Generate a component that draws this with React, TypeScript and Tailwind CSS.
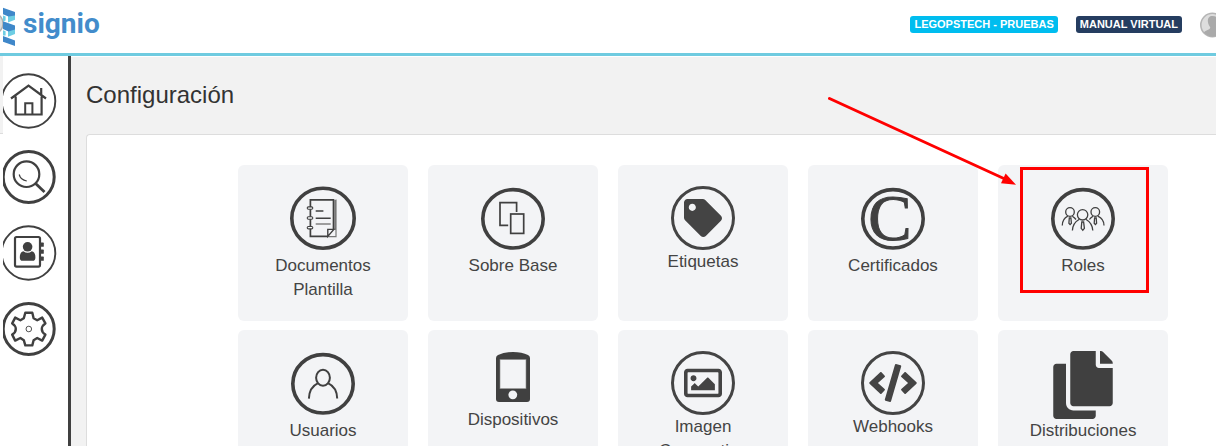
import type { ReactNode } from 'react';
import { FaCode, FaCopy, FaRegImage, FaTag } from 'react-icons/fa';

interface ConfigItem {
  label: string;
  icon: ReactNode;
  highlighted?: boolean;
}

/* Iconos de las tarjetas */
const RoundIcon = ({ children }: { children: ReactNode }) => (
  <span className="flex h-16 w-16 items-center justify-center rounded-full border-3 border-[#444]">
    {children}
  </span>
);

const RingIcon = ({ children }: { children: ReactNode }) => (
  <svg
    width="64"
    height="68"
    viewBox="0 0 64 68"
    fill="none"
    stroke="#404040"
    className="overflow-visible"
    aria-hidden="true"
  >
    <ellipse cx="32" cy="32.8" rx="30.2" ry="29.2" strokeWidth="3.6" />
    {children}
  </svg>
);

const NotebookIcon = () => (
  <svg width="66" height="68" viewBox="0 0 66 68" fill="none" stroke="#404040" aria-hidden="true">
    <ellipse cx="33" cy="32.2" rx="31.2" ry="30" strokeWidth="3.6" />
    <path d="M43.5 43V13.8H20.4V50.4H38" strokeWidth="1.7" />
    <path d="M46 13.5V50.6H38M44.8 14V44" stroke="#777" strokeWidth="1.2" />
    <path d="M37.8 50.4V43.4H43.8L37.8 50.4Z" strokeWidth="1.4" />
    <path d="M25.7 25H33.4M25.7 32.3H40.7" strokeWidth="1.4" />
    <path d="M25.7 38H40.7" stroke="#888" strokeWidth="1.6" />
    <g fill="#f3f4f6" strokeWidth="1.1">
      <rect x="17.2" y="20.9" width="5.6" height="2.4" rx="1.2" />
      <rect x="17.2" y="30.8" width="5.6" height="2.4" rx="1.2" />
      <rect x="17.2" y="40.5" width="5.6" height="2.4" rx="1.2" />
    </g>
  </svg>
);

const DeviceIcon = () => (
  <svg width="34" height="57" viewBox="0 0 34 57" aria-hidden="true">
    <path d="M0 7Q0 5 2 4Q8 1 17 1T32 4Q34 5 34 7V48Q34 51 31 51H3Q0 51 0 48Z" fill="#404040" />
    <rect x="4" y="8.5" width="26" height="29.2" fill="#f3f4f6" stroke="#888" strokeWidth="0.6" />
    <circle cx="16.8" cy="43.8" r="4.4" fill="#f3f4f6" />
  </svg>
);

const items: ConfigItem[] = [
  { label: 'Documentos Plantilla', icon: <NotebookIcon /> },
  {
    label: 'Sobre Base',
    icon: (
      <RingIcon>
        <path d="M35.6 26V16.6H19V39.4H27.2" strokeWidth="1.7" />
        <rect x="29.7" y="28" width="13" height="19.4" strokeWidth="1.7" />
      </RingIcon>
    ),
  },
  {
    label: 'Etiquetas',
    icon: (
      <RoundIcon>
        <FaTag size={38} />
      </RoundIcon>
    ),
  },
  {
    label: 'Certificados',
    icon: (
      <RingIcon>
        <text
          x="29"
          y="54"
          textAnchor="middle"
          fontSize="65"
          fill="#404040"
          strokeWidth="1"
          className="font-['Liberation_Serif',serif]"
        >
          C
        </text>
      </RingIcon>
    ),
  },
  {
    label: 'Roles',
    highlighted: true,
    icon: (
      <RingIcon>
        <g strokeWidth="1.3">
          <circle cx="19" cy="26" r="4.3" />
          <circle cx="44.3" cy="26" r="4.3" />
          <circle cx="31.6" cy="28.8" r="5.2" />
          <path d="M11.3 39.5Q11.3 33 16.8 30.2M21.3 30.2Q23.5 31.5 25 33.5" />
          <path d="M53 39.5Q53 33 46.8 30.2M42 30.2Q39.8 31.5 38.4 33.5" />
          <path d="M21.4 44.5Q21.6 37 28.4 33.2M34.8 33.2Q41.4 37 41.8 44.5" />
          <path d="M18.3 32H19.9L20.4 37.2L19.1 38.6L17.9 37.2ZM43.6 32H45.2L45.6 37.2L44.4 38.6L43.2 37.2Z" />
          <path d="M30.8 36H32.6L33.4 42.4L31.8 44.2L30.2 42.4Z" />
        </g>
      </RingIcon>
    ),
  },
  {
    label: 'Usuarios',
    icon: (
      <RingIcon>
        <ellipse cx="32" cy="26.7" rx="6.9" ry="8" strokeWidth="2" />
        <path d="M17.9 47.6Q18.2 36.5 27 32.2M37 32.2Q46 36.5 46.2 47.6" strokeWidth="2" />
      </RingIcon>
    ),
  },
  { label: 'Dispositivos', icon: <DeviceIcon /> },
  {
    label: 'Imagen Corporativa',
    icon: (
      <RoundIcon>
        <FaRegImage size={38} />
      </RoundIcon>
    ),
  },
  {
    label: 'Webhooks',
    icon: (
      <RoundIcon>
        <FaCode className="h-[38px] w-12 shrink-0" />
      </RoundIcon>
    ),
  },
  { label: 'Distribuciones', icon: <FaCopy size={68} className="text-[#404040]" /> },
];

/* Marco rojo con flecha sobre la opción señalada */
const Highlight = () => (
  <span className="pointer-events-none absolute top-[2px] left-[22px] h-[126px] w-[129px] border-3 border-[#ff0000]">
    <svg
      className="absolute -top-[74px] right-full max-w-none"
      width="195"
      height="96"
      viewBox="0 0 195 96"
      aria-hidden="true"
    >
      <path d="M1.5 2.5L178 83.5" stroke="#ff0000" strokeWidth="3" strokeLinecap="round" />
      <path d="M188 88.7L173 87.2L177.6 77.6Z" fill="#ff0000" />
    </svg>
  </span>
);

const ConfigCard = ({ label, icon, highlighted }: ConfigItem) => (
  <a
    href="#"
    className="relative flex min-h-[156px] flex-col items-center rounded-md bg-[#f3f4f6] px-8 pt-[21px] text-center text-[17px] leading-6 text-[#444]"
  >
    {icon}
    <span>{label}</span>
    {highlighted && <Highlight />}
  </a>
);

const Logo = () => (
  <a href="#" className="flex items-center gap-2 pb-[5px]">
    <svg width="15" height="48" viewBox="0 0 15 48" aria-hidden="true">
      <circle cx="-8" cy="23.5" r="11" fill="#ddd" stroke="#b0b0b0" strokeWidth="1.4" />
      <path d="M3 7H15V46H3Z" fill="#fff" />
      <path d="M8 16L15 12V19.8L8 22.6Z" fill="#6dcde3" />
      <path d="M3 7.7L15 12V15.4L8.5 16.4L3 14.2Z" fill="#3f87c9" />
      <path d="M3 15.4L5.6 16.4V20.4L3 21.6Z" fill="#6dcde3" />
      <path d="M8 31L15 27V34L8 36.8Z" fill="#6dcde3" />
      <path d="M3 21.3L15 25.6V29.6L8.5 31.6L3 29Z" fill="#3f87c9" />
      <path d="M3 30.2L5.6 31.3V35.6L3 35.4Z" fill="#6dcde3" />
      <path d="M3 36L15 40.6V46L3 41.8Z" fill="#3f87c9" />
    </svg>
    <span className="font-['Roboto',sans-serif] text-[28px] leading-8 font-bold text-[#428ccb]">signio</span>
  </a>
);

const SideLink = ({ label, ring, children }: { label: string; ring: 'thin' | 'thick'; children: ReactNode }) => (
  <a href="#" aria-label={label} className="block h-14 text-[#404040]">
    <svg width="56" height="56" viewBox="0 0 56 56" fill="none" stroke="currentColor" aria-hidden="true">
      {ring === 'thin' ? (
        <circle cx="25.5" cy="28" r="26.8" strokeWidth="1.9" />
      ) : (
        <circle cx="25.7" cy="28" r="25.5" strokeWidth="3" />
      )}
      {children}
    </svg>
  </a>
);

const Sidebar = () => (
  <nav className="flex shrink-0 border-r-3 border-[#404040] bg-white">
    <div className="h-[78px] w-[3px] border-b border-[#ddd] bg-[#f2f2f2]" />
    <div className="flex w-[65px] flex-col gap-5 pt-[17px]">
      <SideLink label="Inicio" ring="thin">
        <path d="M8 25.5L25.5 12.5L43 25.5M12.7 23.5V41.5H38.6V23.5M38.2 22V15" strokeWidth="2.2" />
        <path d="M22.2 41V30.2H29.4V41" strokeWidth="2" />
      </SideLink>
      <SideLink label="Buscar" ring="thick">
        <circle cx="23.5" cy="25.2" r="12.8" strokeWidth="2.2" />
        <path d="M32.6 34.4L41.5 43" strokeWidth="2.8" />
        <path d="M16.2 25.5Q17.5 31 23.8 32" strokeWidth="1.2" />
      </SideLink>
      <SideLink label="Contactos" ring="thin">
        <rect x="12" y="12" width="25" height="29.6" rx="1.5" strokeWidth="2.2" />
        <g fill="currentColor" stroke="none">
          <circle cx="24.6" cy="21.8" r="4.8" />
          <path d="M20.4 26.2Q24.6 29.4 28.8 26.2Q32.4 27 32.4 32.4Q32.4 35.8 29.6 35.8H19.6Q16.8 35.8 16.8 32.4Q16.8 27 20.4 26.2Z" />
          <rect x="37" y="17.6" width="3.8" height="4.2" rx="0.6" />
          <rect x="37" y="24.6" width="3.8" height="4.2" rx="0.6" />
          <rect x="37" y="31.6" width="3.8" height="4.2" rx="0.6" />
        </g>
      </SideLink>
      <SideLink label="Configuración" ring="thick">
        <path
          d="M22.3 11.8H29.3L30.6 17.2L34.2 19.2L39.2 16.6L42.4 22.4Q38.8 24.6 38.8 28T42.4 33.6L39.2 39.6L34.2 37L30.6 39.2L29.3 44.4H22.3L20.8 39.2L17.4 37L12.2 39.6L9.2 33.6Q12.8 31.4 12.8 28T9.2 22.4L12.2 16.6L17.4 19.2L20.8 17.2Z"
          strokeWidth="2.4"
          strokeLinejoin="round"
        />
        <circle cx="25.8" cy="28" r="2.8" strokeWidth="0.9" />
      </SideLink>
    </div>
  </nav>
);

const Header = () => (
  <header className="flex h-14 shrink-0 items-center justify-between border-b-3 border-[#6fcbe0] bg-white">
    <Logo />
    <div className="flex items-center gap-[18px] pb-1">
      <a href="#" className="rounded-[3px] bg-[#00bdef] px-1 text-[11px] leading-[17px] font-bold text-white">
        LEGOPSTECH - PRUEBAS
      </a>
      <a href="#" className="rounded-[3px] bg-[#253d60] px-1 text-[11px] leading-[17px] font-bold text-white">
        MANUAL VIRTUAL
      </a>
      <button type="button" aria-label="Perfil">
        <svg width="16" height="26" viewBox="0 0 16 26" aria-hidden="true">
          <circle cx="12.5" cy="13" r="11.7" fill="#ddd" stroke="#b5b5b5" strokeWidth="1.6" />
          <path
            d="M12.5 4C8.8 4 7.6 6.6 7.9 9.8C8.1 12.5 9.4 14 10.2 15.2C10.6 18 5.5 18 3.8 20.6A11.6 11.6 0 0 0 16 24V4.8Q14.6 4 12.5 4Z"
            fill="#aaa"
          />
        </svg>
      </button>
    </div>
  </header>
);

export default function App() {
  return (
    <div className="flex h-screen flex-col overflow-hidden bg-[#f2f2f2] font-['Liberation_Sans',Arial,sans-serif]">
      <Header />
      <div className="flex min-h-0 flex-1">
        <Sidebar />
        <main className="flex min-w-0 flex-1 flex-col border-t border-white pt-[22px] pl-[15px]">
          <h1 className="mb-[23px] text-2xl leading-8 text-[#333]">Configuración</h1>
          <section className="flex-1 rounded-tl border-t border-l border-[#ddd] bg-white pt-[30px] pr-12 pl-[151px]">
            <div className="grid grid-cols-5 gap-x-5 gap-y-[9px]">
              {items.map((item) => (
                <ConfigCard key={item.label} {...item} />
              ))}
            </div>
          </section>
        </main>
      </div>
    </div>
  );
}
